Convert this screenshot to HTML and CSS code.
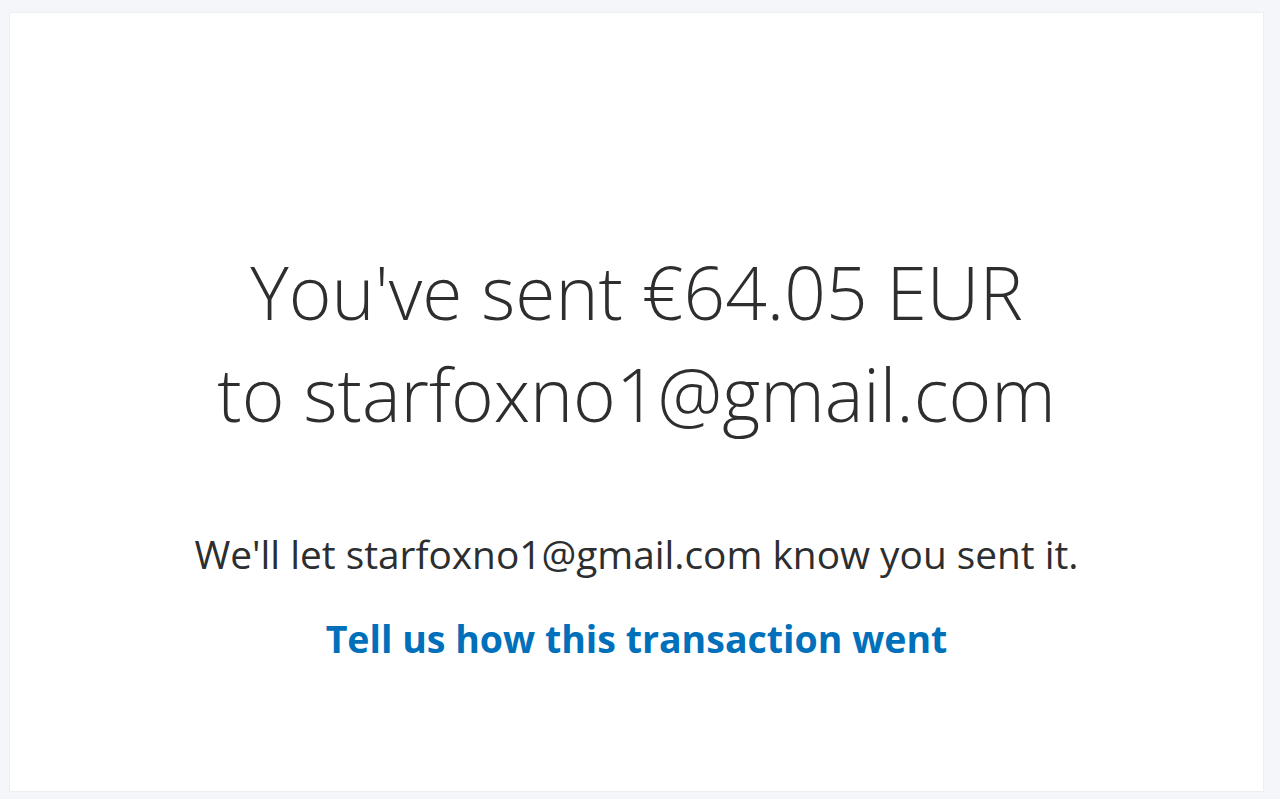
FILE: index.html
```html
<!DOCTYPE html>
<html lang="en">
<head>
    <meta charset="UTF-8">
    <meta name="viewport" content="width=device-width, initial-scale=1.0">
    <title>Payment sent</title>
    <link rel="stylesheet" href="styles.css">
</head>
<body>
    <main class="card">
        <h1 class="headline">You've sent €64.05 EUR<br>to starfoxno1@gmail.com</h1>
        <p class="note">We'll let starfoxno1@gmail.com know you sent it.</p>
        <a class="feedback" href="#">Tell us how this transaction went</a>
    </main>
</body>
</html>
```

FILE: styles.css
```css
:root {
    --page-bg: #f5f6f9;
    --text-color: #2c2e2f;
    --link-color: #0070ba;
}

body {
    font-family: 'Open Sans', Lato, sans-serif;
    background-color: var(--page-bg);
    color: var(--text-color);
    margin: 0;
    padding: 12px 16px 7px 9px;
    height: 799px;
    box-sizing: border-box;
}

.card {
    height: 100%;
    box-sizing: border-box;
    background: white;
    border: 1px solid #eceef2;
    display: flex;
    flex-direction: column;
    align-items: center;
    padding-top: 228px;
    text-align: center;
}

.headline {
    font-size: 73px;
    font-weight: 300;
    line-height: 102px;
    margin: 0;
}

.note {
    font-size: 38.8px;
    margin: 85px 0 0;
    line-height: 48px;
}

.feedback {
    font-size: 37.5px;
    font-weight: 700;
    line-height: normal;
    color: var(--link-color);
    text-decoration: none;
    margin-top: 35px;
}
```
